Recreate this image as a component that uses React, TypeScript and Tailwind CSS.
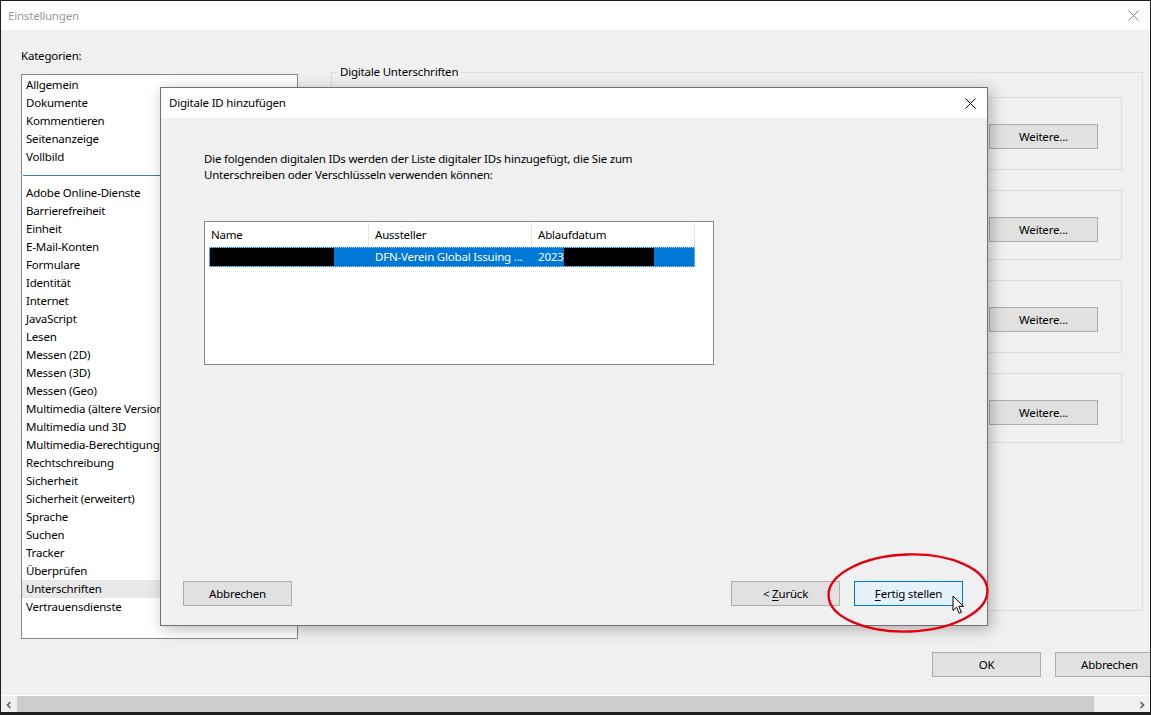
import { ReactNode } from 'react'

const TOP_ITEMS = ['Allgemein', 'Dokumente', 'Kommentieren', 'Seitenanzeige', 'Vollbild']

const ITEMS = [
  'Adobe Online-Dienste',
  'Barrierefreiheit',
  'Einheit',
  'E-Mail-Konten',
  'Formulare',
  'Identität',
  'Internet',
  'JavaScript',
  'Lesen',
  'Messen (2D)',
  'Messen (3D)',
  'Messen (Geo)',
  'Multimedia (ältere Versionen)',
  'Multimedia und 3D',
  'Multimedia-Berechtigungen',
  'Rechtschreibung',
  'Sicherheit',
  'Sicherheit (erweitert)',
  'Sprache',
  'Suchen',
  'Tracker',
  'Überprüfen',
  'Unterschriften',
  'Vertrauensdienste',
]

// inner group boxes of "Digitale Unterschriften"
const BOXES = ['h-[73px]', 'h-[70px]', 'h-[73px]', 'h-[70px]']

function Btn({ children, primary = false }: { children: ReactNode; primary?: boolean }) {
  return (
    <button
      className={`h-[25px] w-[109px] shrink-0 flex items-center justify-center border text-black ${
        primary ? 'border-[#0078d7] bg-[#e5f1fb]' : 'border-[#adadad] bg-[#e1e1e1]'
      }`}
    >
      {children}
    </button>
  )
}

function CloseX({ color }: { color: string }) {
  return (
    <svg width="11" height="11" viewBox="0 0 11 11" className={color}>
      <path d="M0.5 0.5 L10.5 10.5 M10.5 0.5 L0.5 10.5" stroke="currentColor" strokeWidth="1" fill="none" />
    </svg>
  )
}

export default function App() {
  return (
    <div className="relative w-[1151px] h-[715px] overflow-hidden border border-[#1f1f1f] border-b-[3px] bg-[#f0f0f0] font-['Noto_Sans',sans-serif] text-[11.5px] tracking-[-0.2px] text-black select-none">
      {/* Title bar */}
      <div className="h-[29px] bg-white flex items-center justify-between pl-[7px] pr-[11px]">
        <span className="text-[#999999]">Einstellungen</span>
        <CloseX color="text-[#8a8a8a]" />
      </div>

      {/* Main content */}
      <div className="flex h-[609px]">
        {/* Kategorien */}
        <div className="ml-[20px] w-[277px] flex flex-col pt-[18px]">
          <div className="h-[16px] leading-[16px]">Kategorien:</div>
          <div className="mt-[10px] h-[565px] border border-[#828790] bg-white pt-[1px] overflow-hidden">
            {TOP_ITEMS.map((t) => (
              <div key={t} className="h-[18px] leading-[18px] pl-[4px] whitespace-nowrap">
                {t}
              </div>
            ))}
            <div className="h-[18px] flex items-center px-[1px]">
              <div className="w-full h-px bg-[#3f7cba]" />
            </div>
            {ITEMS.map((t) => (
              <div
                key={t}
                className={`h-[18px] leading-[18px] pl-[4px] whitespace-nowrap ${
                  t === 'Unterschriften' ? 'bg-[#e8e8e8]' : ''
                }`}
              >
                {t}
              </div>
            ))}
          </div>
        </div>

        {/* Digitale Unterschriften */}
        <fieldset className="ml-[33px] mt-[34px] w-[812px] h-[547px] border border-[#dcdcdc] flex flex-col items-end">
          <legend className="ml-[5px] px-[3px] h-[16px] leading-[16px]">Digitale Unterschriften</legend>
          <div className="w-[770px] mr-[20px] flex flex-col gap-[20px] mt-[17px]">
            {BOXES.map((h, i) => (
              <div key={i} className={`${h} border border-[#dcdcdc] flex justify-end pt-[26px] pr-[23px]`}>
                <Btn>Weitere...</Btn>
              </div>
            ))}
          </div>
        </fieldset>
      </div>

      {/* OK / Abbrechen */}
      <div className="mt-[13px] flex gap-[14px] pl-[931px]">
        <Btn>OK</Btn>
        <Btn>Abbrechen</Btn>
      </div>

      {/* Horizontal scrollbar */}
      <div className="mt-[18px] h-[18px] border-t border-white flex bg-[#f0f0f0]">
        <div className="w-[16px] flex items-center justify-center text-[#606060]">
          <svg width="8" height="8" viewBox="0 0 8 8">
            <path d="M5.5 1 L2.5 4 L5.5 7" stroke="currentColor" strokeWidth="1.6" fill="none" />
          </svg>
        </div>
        <div className="w-[1077px] bg-[#cdcdcd]" />
        <div className="flex-1" />
        <div className="w-[16px] flex items-center justify-center text-[#606060]">
          <svg width="8" height="8" viewBox="0 0 8 8">
            <path d="M2.5 1 L5.5 4 L2.5 7" stroke="currentColor" strokeWidth="1.6" fill="none" />
          </svg>
        </div>
      </div>

      {/* Dialog: Digitale ID hinzufügen */}
      <div className="absolute left-[159px] top-[86px] w-[828px] h-[539px] border border-[#707070] bg-[#f0f0f0] flex flex-col shadow-[3px_3px_14px_rgba(0,0,0,0.28)]">
        <div className="h-[30px] bg-white flex items-center justify-between pl-[8px] pr-[11px]">
          <span>Digitale ID hinzufügen</span>
          <CloseX color="text-black" />
        </div>
        <div className="flex-1 flex flex-col pl-[43px] pr-[24px] pt-[33px] pb-[19px]">
          <p className="leading-[16px]">
            Die folgenden digitalen IDs werden der Liste digitaler IDs hinzugefügt, die Sie zum
            <br />
            Unterschreiben oder Verschlüsseln verwenden können:
          </p>
          <div className="mt-[38px] w-[510px] h-[144px] border border-[#828790] bg-white pt-[1px] pl-[4px]">
            <div className="flex h-[24px] items-center">
              <div className="w-[160px] h-full pl-[2px] border-r border-[#e5e5e5] flex items-center">Name</div>
              <div className="w-[163px] h-full pl-[6px] border-r border-[#e5e5e5] flex items-center">Aussteller</div>
              <div className="w-[163px] h-full pl-[6px] border-r border-[#e5e5e5] flex items-center">Ablaufdatum</div>
            </div>
            <div className="w-[486px] h-[20px] bg-[#0078d7] border border-dotted border-[#9ec9f0] flex items-center text-white">
              <div className="w-[158px] h-full shrink-0 flex">
                <div className="w-[124px] h-full bg-black" />
              </div>
              <div className="w-[163px] shrink-0 pl-[7px] whitespace-nowrap overflow-hidden">DFN-Verein Global Issuing ...</div>
              <div className="flex items-center h-full pl-[7px]">
                <span>2023</span>
                <div className="w-[90px] h-full bg-black" />
              </div>
            </div>
          </div>
          <div className="flex-1" />
          <div className="flex items-center">
            <div className="ml-[-21px]">
              <Btn>Abbrechen</Btn>
            </div>
            <div className="flex-1" />
            <Btn>
              <span>
                &lt; <span className="underline underline-offset-2">Z</span>urück
              </span>
            </Btn>
            <div className="w-[14px]" />
            <Btn primary>
              <span>
                <span className="underline underline-offset-2">F</span>ertig stellen
              </span>
            </Btn>
          </div>
        </div>
      </div>

      {/* red marker ellipse */}
      <svg className="absolute left-[824px] top-[550px]" width="166" height="84" viewBox="0 0 166 84">
        <ellipse cx="83" cy="42" rx="79.5" ry="38.5" stroke="#e3000f" strokeWidth="2.4" fill="none" transform="rotate(-2 83 42)" />
      </svg>

      {/* mouse cursor */}
      <svg className="absolute left-[951px] top-[594px]" width="14" height="20" viewBox="0 0 14 20">
        <path
          d="M1 1 L1 15.5 L4.5 12.2 L7.2 18.3 L9.4 17.3 L6.8 11.4 L11.5 11.4 Z"
          fill="white"
          stroke="black"
          strokeWidth="1"
          strokeLinejoin="round"
        />
      </svg>
    </div>
  )
}
